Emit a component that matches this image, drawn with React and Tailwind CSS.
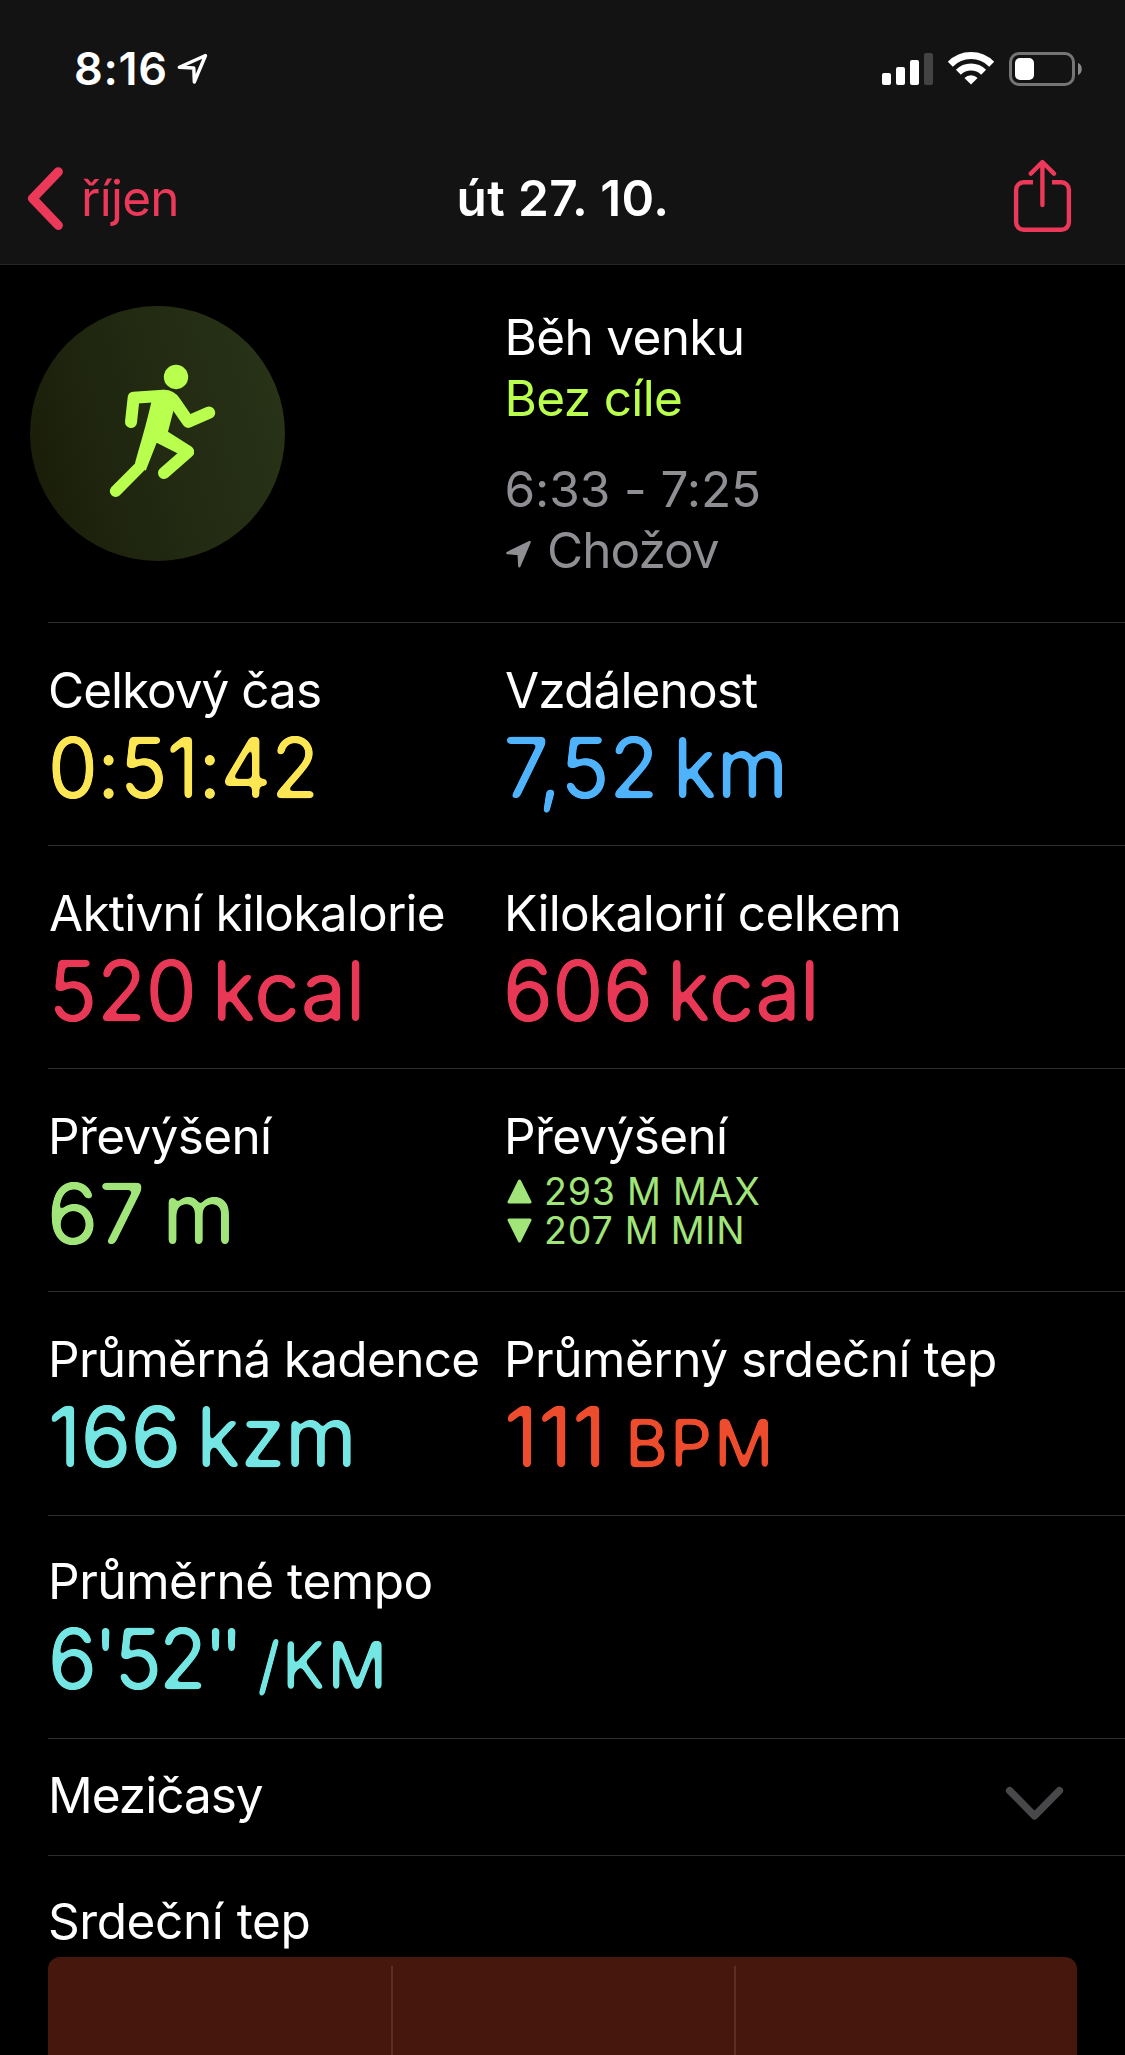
import React from "react";

function RoundFilter() {
  return (
    <svg width="0" height="0" className="absolute" aria-hidden="true">
      <filter id="soften-corners" colorInterpolationFilters="sRGB" x="-5%" y="-5%" width="110%" height="110%">
        <feGaussianBlur stdDeviation="2.2" />
        <feComponentTransfer>
          <feFuncA type="linear" slope="7" intercept="-2.75" />
        </feComponentTransfer>
      </filter>
    </svg>
  );
}

function StatusBar() {
  return (
    <div className="flex h-[132px] items-start justify-between pl-[74px] pr-[43px] pt-[52px]">
      <div className="flex items-start">
        <span className="-mt-[9px] text-[45px] font-semibold leading-[52px] tracking-[0.7px] text-white">8:16</span>
        <svg viewBox="176 52 33 34" className="ml-[8px] h-[34px] w-[33px]">
          <path d="M205.5 55.5 L179.3 67.2 L193.8 68 L194.3 82 Z" fill="none" stroke="#fff" strokeWidth="3.4" strokeLinejoin="round" />
        </svg>
      </div>
      <svg viewBox="882 52 200 34" className="h-[34px] w-[200px]">
        <g fill="#fff">
          <rect x="882" y="73" width="9" height="12" rx="2" />
          <rect x="896" y="67" width="9" height="18" rx="2" />
          <rect x="910" y="60" width="9" height="25" rx="2" />
          <rect x="924" y="53" width="9" height="32" rx="2" fill="#434343" />
          <path d="M971 84.6 L964.4 77.9 A9.6 9.6 0 0 1 977.6 77.9 Z" />
          <rect x="1015" y="58" width="19" height="22" rx="5" />
        </g>
        <path d="M950.3 64.3 A28.9 28.9 0 0 1 991.7 64.3" fill="none" stroke="#fff" strokeWidth="7" />
        <path d="M958.4 72.2 A17.8 17.8 0 0 1 983.6 72.2" fill="none" stroke="#fff" strokeWidth="7" />
        <rect x="1010.5" y="53.5" width="63" height="31" rx="8.5" fill="none" stroke="#757575" strokeWidth="3" />
        <path d="M1078 62.8 A7 7 0 0 1 1078 75.2 Z" fill="#8a8a8a" />
      </svg>
    </div>
  );
}

function NavBar() {
  return (
    <div className="grid h-[132px] grid-cols-[1fr_auto_1fr] items-start">
      <div className="flex items-start pl-[26px] pt-[34px]">
        <svg viewBox="26 166 38 66" className="h-[66px] w-[38px]">
          <path d="M58.3 171.8 L32.6 198.5 L58.3 225.4" fill="none" stroke="#ec3959" strokeWidth="9.2" strokeLinecap="round" strokeLinejoin="round" />
        </svg>
        <span className="ml-[17px] text-[49.5px] leading-[64px] tracking-[-0.75px] text-[#ec3959]">říjen</span>
      </div>
      <h1 className="pl-px pt-[34px] text-[49.5px] font-semibold leading-[64px] tracking-[0.45px] text-white">út 27. 10.</h1>
      <div className="flex justify-end pr-[53px] pt-[27px]">
        <svg viewBox="1013 159 59 75" className="h-[75px] w-[59px]">
          <g fill="none" stroke="#ec3959" strokeWidth="4.4" strokeLinecap="round" strokeLinejoin="round">
            <path d="M1033 182.3 h-9.5 a7.5 7.5 0 0 0 -7.4 7.5 v32.5 a7.5 7.5 0 0 0 7.5 7.5 h37.8 a7.5 7.5 0 0 0 7.5 -7.5 v-32.5 a7.5 7.5 0 0 0 -7.4 -7.5 h-9.5" strokeLinecap="butt" />
            <path d="M1042.4 162.5 V205 M1030.8 173.6 L1042.4 162 L1054 173.6" />
          </g>
        </svg>
      </div>
    </div>
  );
}

function Hero() {
  return (
    <section className="flex h-[357px] pl-[30px] pt-[41px]">
      <div className="size-[255px] rounded-full bg-[linear-gradient(75deg,#191c07,#222a12_50%,#293418)]">
        <svg viewBox="90 78 765 765" className="size-full">
          <g fill="#b9ff4d" stroke="#b9ff4d" strokeLinecap="round" strokeLinejoin="round">
            <circle cx="528" cy="291" r="36.5" stroke="none" />
            <path d="M393 426 L401 353 L490 347" fill="none" strokeWidth="36" />
            <path d="M492 348 Q512 348 524 366 L565 425 L627 398" fill="none" strokeWidth="37" />
            <path d="M456 350 L520 350 L524 378 L504 455 L575 500 Q586 510 580 524 L558 520 L532 520 L470 488 L437 572 L420 562 L405 549 C422 490 437 440 454 367 Z" stroke="none" />
            <path d="M564 516 L492 579" fill="none" strokeWidth="36" />
            <path d="M419 561 L347 633.5" fill="none" strokeWidth="35" />
          </g>
        </svg>
      </div>
      <div className="ml-[219.5px] mt-px flex flex-col text-[49.5px] leading-[61px]">
        <span className="tracking-[-0.65px] text-white">Běh venku</span>
        <span className="tracking-[-0.65px] text-[#b9ff4d]">Bez cíle</span>
        <span className="mt-[30px] tracking-[-0.1px] text-[#8e8e93]">6:33 - 7:25</span>
        <span className="flex tracking-[-1px] text-[#8e8e93]">
          <svg viewBox="75 775 81 87" className="mt-[19.5px] h-[29px] w-[27px]">
            <path d="M149 781 L82 814 L116 817 L118 854 Z" fill="#8e8e93" stroke="#8e8e93" strokeWidth="7" strokeLinejoin="round" />
          </svg>
          <span className="ml-[15.5px]">Chožov</span>
        </span>
      </div>
    </section>
  );
}

function Value({ children, className }) {
  return (
    <div className={`mt-[3px] flex h-[90px] origin-left items-baseline whitespace-pre text-[84px] leading-[90px] filter-[url(#soften-corners)] ${className}`}>
      {children}
    </div>
  );
}

function Label({ children, className = "tracking-[-0.65px]" }) {
  return <div className={`h-[60px] whitespace-nowrap text-[49.5px] leading-[60px] text-white ${className}`}>{children}</div>;
}

function Row({ children, className = "h-[223px] pt-[37px]" }) {
  return <section className={`ml-12 grid grid-cols-[456px_1fr] border-b border-[#2d2d2f] ${className}`}>{children}</section>;
}

function Elevation({ up, children, className }) {
  return (
    <div className={`flex items-start text-[37.5px] leading-[39px] text-[#a1e57a] ${className}`}>
      <svg viewBox="0 0 25 25" className="ml-[2.5px] mr-[12.5px] mt-[7px] size-[25px]">
        <path d={up ? "M12.5 2 L23 23 H2 Z" : "M12.5 23 L23 2 H2 Z"} fill="#a1e57a" stroke="#a1e57a" strokeWidth="3" strokeLinejoin="round" />
      </svg>
      <span>{children}</span>
    </div>
  );
}

export default function App() {
  return (
    <main className="h-[2055px] w-[1125px] overflow-hidden bg-black font-['Inter',sans-serif]">
      <RoundFilter />
      <header className="h-[265px] border-b border-[#262626] bg-[#131313]">
        <StatusBar />
        <NavBar />
      </header>
      <Hero />
      <div className="ml-12 h-px bg-[#2d2d2f]" />

      <Row>
        <div>
          <Label className="tracking-[-1px]">Celkový čas</Label>
          <Value className="scale-x-[0.94] tracking-[-0.6px] text-[#fce653]">0:51:42</Value>
        </div>
        <div>
          <Label className="pl-px tracking-[-0.86px]">Vzdálenost</Label>
          <Value className="-ml-px scale-x-[0.97] tracking-[-0.6px] [word-spacing:-8px] text-[#4fb3fc]">7,52 km</Value>
        </div>
      </Row>
      <Row>
        <div>
          <Label className="pl-px tracking-[-0.75px]">Aktivní kilokalorie</Label>
          <Value className="scale-x-[0.965] tracking-[-0.5px] [word-spacing:-7px] text-[#e83856]">520 kcal</Value>
        </div>
        <div>
          <Label className="tracking-[-0.65px]">Kilokalorií celkem</Label>
          <Value className="-ml-px scale-x-[0.96] tracking-[-0.5px] [word-spacing:-8px] text-[#e83856]">606 kcal</Value>
        </div>
      </Row>
      <Row>
        <div>
          <Label>Převýšení</Label>
          <Value className="-ml-px scale-x-[0.985] [word-spacing:-6px] text-[#a1e57a]">67 m</Value>
        </div>
        <div>
          <Label>Převýšení</Label>
          <div className="mt-[6px]">
            <Elevation up className="tracking-[0.78px]">293 M MAX</Elevation>
            <Elevation className="tracking-[0.8px]">207 M MIN</Elevation>
          </div>
        </div>
      </Row>
      <Row className="h-[224px] pt-[37px]">
        <div>
          <Label className="tracking-[-0.7px]">Průměrná kadence</Label>
          <Value className="scale-x-[0.97] tracking-[-0.5px] [word-spacing:-7px] text-[#74e6e3]">166 kzm</Value>
        </div>
        <div>
          <Label className="tracking-[-0.5px]">Průměrný srdeční tep</Label>
          <Value className="text-[#ed4c2d]">
            <span className="w-[121px]">111</span>
            <span className="text-[66px] tracking-[1.8px]">BPM</span>
          </Value>
        </div>
      </Row>
      <Row className="h-[223px] pt-[35px]">
        <div>
          <Label className="tracking-[-0.45px]">Průměrné tempo</Label>
          <Value className="text-[#74e6e3]">
            <span className="w-[209px] origin-left scale-x-[0.94] tracking-[-3.5px]">6'52<span className="tracking-[-8px]">''</span></span>
            <span className="text-[66px] tracking-[1.2px]">/KM</span>
          </Value>
        </div>
      </Row>

      <section className="ml-12 flex h-[117px] justify-between border-b border-[#2d2d2f] pr-[60px] pt-[26px]">
        <Label className="tracking-[-1px]">Mezičasy</Label>
        <svg viewBox="1004 1785 61 37" className="mt-[20px] h-[37px] w-[61px]">
          <path d="M1009.6 1790.6 L1034.5 1815.8 L1059.4 1790.6" fill="none" stroke="#48484b" strokeWidth="7.4" strokeLinecap="round" strokeLinejoin="round" />
        </svg>
      </section>

      <section className="ml-12 mr-12 pt-[35px]">
        <Label className="tracking-[-0.42px]">Srdeční tep</Label>
        <div className="mt-[6px] grid h-[120px] grid-cols-3 rounded-t-[12px] bg-[#46170c] pt-[9px]">
          <div />
          <div className="border-l-2 border-[#5c2e25]" />
          <div className="border-l-2 border-[#5c2e25]" />
        </div>
      </section>
    </main>
  );
}
